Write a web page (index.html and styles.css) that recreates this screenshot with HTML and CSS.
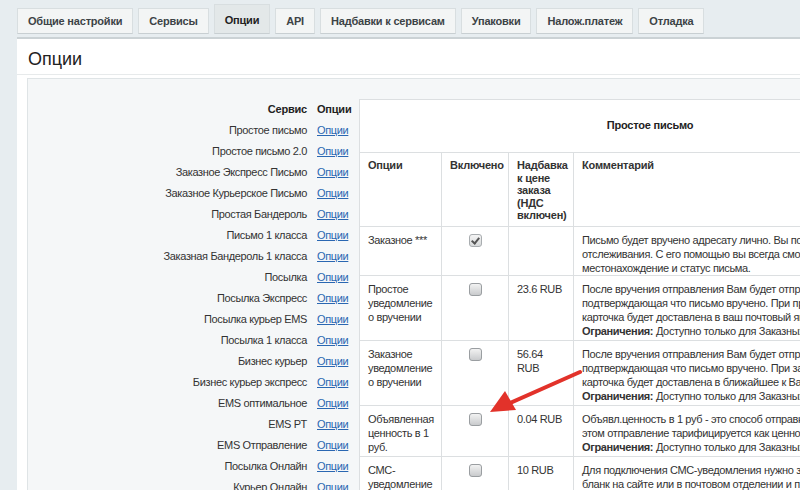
FILE: index.html
```html
<!DOCTYPE html>
<html>
<head>
    <meta charset="utf-8">
    <title>Опции</title>
    <link rel="stylesheet" href="styles.css">
</head>
<body>
    <div class="page">
        <div class="tabs">
            <div class="tab">Общие настройки</div>
            <div class="tab">Сервисы</div>
            <div class="tab active">Опции</div>
            <div class="tab">API</div>
            <div class="tab">Надбавки к сервисам</div>
            <div class="tab">Упаковки</div>
            <div class="tab">Налож.платеж</div>
            <div class="tab">Отладка</div>
        </div>

        <div class="panel">
            <div class="panel-head">Опции</div>

            <div class="inner">
                <div class="services">
                    <table class="service-list">
                        <tr><th class="name">Сервис</th><th class="link">Опции</th></tr>
                        <tr><td class="name">Простое письмо</td><td class="link"><a href="#">Опции</a></td></tr>
                        <tr><td class="name">Простое письмо 2.0</td><td class="link"><a href="#">Опции</a></td></tr>
                        <tr><td class="name">Заказное Экспресс Письмо</td><td class="link"><a href="#">Опции</a></td></tr>
                        <tr><td class="name">Заказное Курьерское Письмо</td><td class="link"><a href="#">Опции</a></td></tr>
                        <tr><td class="name">Простая Бандероль</td><td class="link"><a href="#">Опции</a></td></tr>
                        <tr><td class="name">Письмо 1 класса</td><td class="link"><a href="#">Опции</a></td></tr>
                        <tr><td class="name">Заказная Бандероль 1 класса</td><td class="link"><a href="#">Опции</a></td></tr>
                        <tr><td class="name">Посылка</td><td class="link"><a href="#">Опции</a></td></tr>
                        <tr><td class="name">Посылка Экспресс</td><td class="link"><a href="#">Опции</a></td></tr>
                        <tr><td class="name">Посылка курьер EMS</td><td class="link"><a href="#">Опции</a></td></tr>
                        <tr><td class="name">Посылка 1 класса</td><td class="link"><a href="#">Опции</a></td></tr>
                        <tr><td class="name">Бизнес курьер</td><td class="link"><a href="#">Опции</a></td></tr>
                        <tr><td class="name">Бизнес курьер экспресс</td><td class="link"><a href="#">Опции</a></td></tr>
                        <tr><td class="name">EMS оптимальное</td><td class="link"><a href="#">Опции</a></td></tr>
                        <tr><td class="name">EMS PT</td><td class="link"><a href="#">Опции</a></td></tr>
                        <tr><td class="name">EMS Отправление</td><td class="link"><a href="#">Опции</a></td></tr>
                        <tr><td class="name">Посылка Онлайн</td><td class="link"><a href="#">Опции</a></td></tr>
                        <tr><td class="name">Курьер Онлайн</td><td class="link"><a href="#">Опции</a></td></tr>
                    </table>
                </div>

                <table class="options">
                    <colgroup>
                        <col class="c-name">
                        <col class="c-on">
                        <col class="c-price">
                        <col class="c-note">
                    </colgroup>
                    <tr><th colspan="4" class="title">Простое письмо</th></tr>
                    <tr class="cols">
                        <th>Опции</th>
                        <th>Включено</th>
                        <th>Надбавка<br>к цене<br>заказа<br>(НДС<br>включен)</th>
                        <th>Комментарий</th>
                    </tr>
                    <tr class="short">
                        <td>Заказное ***</td>
                        <td class="check"><span class="box checked"></span></td>
                        <td class="price"></td>
                        <td class="note">Письмо будет вручено адресату лично. Вы получите трек-номер для<br>отслеживания. С его помощью вы всегда сможете узнать<br>местонахождение и статус письма.</td>
                    </tr>
                    <tr>
                        <td>Простое<br>уведомление<br>о вручении</td>
                        <td class="check"><span class="box"></span></td>
                        <td class="price">23.6 RUB</td>
                        <td class="note">После вручения отправления Вам будет отправлена карточка,<br>подтверждающая что письмо вручено. При простом уведомлении<br>карточка будет доставлена в ваш почтовый ящик.<br><b>Ограничения:</b> Доступно только для Заказных отправлений.</td>
                    </tr>
                    <tr>
                        <td>Заказное<br>уведомление<br>о вручении</td>
                        <td class="check"><span class="box"></span></td>
                        <td class="price">56.64<br>RUB</td>
                        <td class="note">После вручения отправления Вам будет отправлена карточка,<br>подтверждающая что письмо вручено. При заказном уведомлении<br>карточка будет доставлена в ближайшее к Вам отделение.<br><b>Ограничения:</b> Доступно только для Заказных отправлений.</td>
                    </tr>
                    <tr>
                        <td>Объявленная<br>ценность в 1<br>руб.</td>
                        <td class="check"><span class="box"></span></td>
                        <td class="price">0.04 RUB</td>
                        <td class="note">Объявл.ценность в 1 руб - это способ отправки с описью. При<br>этом отправление тарифицируется как ценное письмо.<br><b>Ограничения:</b> Доступно только для Заказных отправлений.</td>
                    </tr>
                    <tr>
                        <td>СМС-<br>уведомление<br>о вручении</td>
                        <td class="check"><span class="box"></span></td>
                        <td class="price">10 RUB</td>
                        <td class="note">Для подключения СМС-уведомления нужно заполнить<br>бланк на сайте или в почтовом отделении и передать его<br>вместе с отправлением.</td>
                    </tr>
                </table>
            </div>
        </div>

        <svg class="arrow" width="110" height="60" viewBox="0 0 110 60">
            <line x1="98" y1="8" x2="26" y2="40" stroke="#e2322a" stroke-width="4" stroke-linecap="round"/>
            <polygon points="8,48 23,27 34,46" fill="#e2322a"/>
        </svg>
    </div>
</body>
</html>
```

FILE: styles.css
```css
body {
    margin: 0;
    background: #e7edf0;
    font-family: "Liberation Sans", Arial, sans-serif;
    font-size: 11px;
    letter-spacing: -0.35px;
    color: #333;
    overflow: hidden;
}
.page {
    position: relative;
    height: 490px;
    padding-left: 17px;
}
.tabs {
    display: flex;
    align-items: flex-end;
    gap: 5px;
    height: 34px;
}
.tab {
    height: 24px;
    line-height: 24px;
    padding: 0 10px;
    background: #f3f5f5;
    border: 1px solid #d8dee0;
    border-bottom-color: #c8cfd2;
    font-weight: bold;
    letter-spacing: -0.2px;
    color: #3c4346;
}
.tab.active {
    height: 28px;
    line-height: 30px;
    background: #e3e8e9;
    color: #222;
}
.panel {
    margin-top: 3px;
    background: #fff;
    border-top: 2px solid #cbd2d5;
    height: 460px;
}
.panel-head {
    padding: 9px 11px 4px;
    font-size: 18px;
    line-height: 22px;
    letter-spacing: 0;
    color: #222;
    border-bottom: 1px solid #e7eaeb;
}
.inner {
    display: flex;
    gap: 7px;
    margin: 3px 0 0 10px;
    padding-top: 20px;
    height: 420px;
    background: #f5f7f8;
    border: 1px solid #dfe4e6;
    border-right: none;
}
.services {
    flex: 0 0 324px;
}
.service-list {
    width: 100%;
    border-collapse: collapse;
}
.service-list th, .service-list td {
    height: 21px;
    padding: 0;
    line-height: 15px;
}
.service-list .name {
    text-align: right;
    padding-right: 10px;
}
.service-list .link {
    width: 35px;
    text-align: left;
}
.service-list th {
    font-weight: bold;
    letter-spacing: -0.2px;
    color: #222;
}
.service-list a {
    color: #2a67b2;
}
.options {
    flex: 0 0 582px;
    width: 582px;
    table-layout: fixed;
    border-collapse: collapse;
    background: #fff;
    align-self: flex-start;
}
.c-name { width: 82px; }
.c-on { width: 67px; }
.c-price { width: 65px; }
.options th, .options td {
    border: 1px solid #dcdfe1;
    text-align: left;
    vertical-align: top;
    padding: 6px 8px 2px;
    line-height: 14px;
}
.options th {
    font-weight: bold;
    letter-spacing: -0.2px;
    color: #333;
}
.options .title {
    height: 50px;
    text-align: center;
    vertical-align: middle;
    padding: 0 0 2px;
    color: #222;
}
.options .cols th {
    height: 67px;
    line-height: 12.5px;
    padding: 6px 8px 0;
}
.options .short td {
    padding-bottom: 0;
}
.options .price {
    white-space: nowrap;
}
.options .note {
    white-space: nowrap;
    overflow: hidden;
}
.options .check {
    text-align: center;
    padding-top: 7px;
}
.box {
    display: inline-block;
    width: 11px;
    height: 11px;
    border: 1px solid #9a9ea1;
    border-radius: 3px;
    background: linear-gradient(#f2f2f2, #c9cbcd);
    position: relative;
}
.box.checked {
    border-color: #a9adb0;
    background: linear-gradient(#f4f4f4, #d7d9da);
}
.box.checked::after {
    content: "";
    position: absolute;
    left: 3px;
    top: 1px;
    width: 3px;
    height: 6px;
    border: solid #555;
    border-width: 0 2px 2px 0;
    transform: rotate(40deg);
}
.arrow {
    position: absolute;
    left: 482px;
    top: 364px;
}
```
